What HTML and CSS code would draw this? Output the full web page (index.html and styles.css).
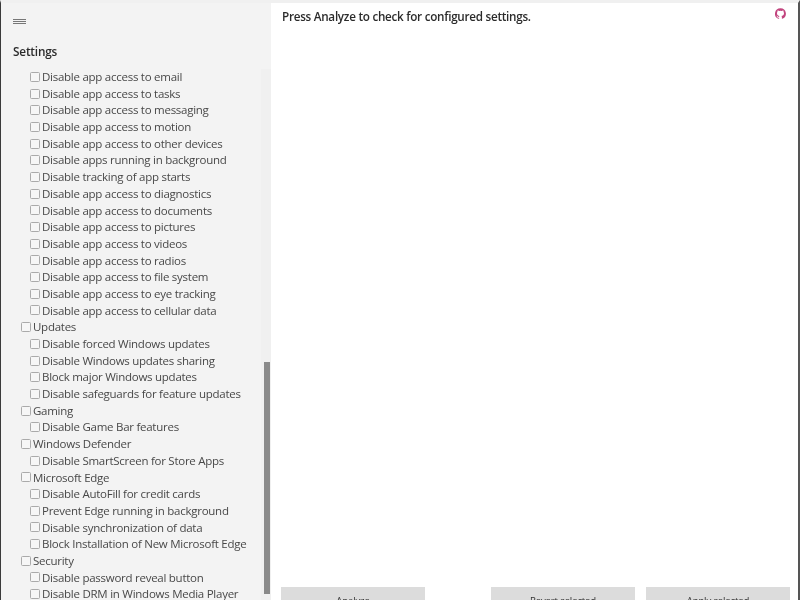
FILE: index.html
```html
<!DOCTYPE html>
<html lang="en">
<head>
<meta charset="utf-8">
<title>Settings</title>
<link rel="stylesheet" href="styles.css">
</head>
<body>
<div class="window">
  <aside class="sidebar">
    <div class="menu"><span></span><span></span><span></span></div>
    <h2 class="heading">Settings</h2>
    <div class="scroller">
      <ul class="tree">
        <li class="sub"><i></i>Disable app access to email</li>
        <li class="sub"><i></i>Disable app access to tasks</li>
        <li class="sub"><i></i>Disable app access to messaging</li>
        <li class="sub"><i></i>Disable app access to motion</li>
        <li class="sub"><i></i>Disable app access to other devices</li>
        <li class="sub"><i></i>Disable apps running in background</li>
        <li class="sub"><i></i>Disable tracking of app starts</li>
        <li class="sub"><i></i>Disable app access to diagnostics</li>
        <li class="sub"><i></i>Disable app access to documents</li>
        <li class="sub"><i></i>Disable app access to pictures</li>
        <li class="sub"><i></i>Disable app access to videos</li>
        <li class="sub"><i></i>Disable app access to radios</li>
        <li class="sub"><i></i>Disable app access to file system</li>
        <li class="sub"><i></i>Disable app access to eye tracking</li>
        <li class="sub"><i></i>Disable app access to cellular data</li>
        <li class="top"><i></i>Updates</li>
        <li class="sub"><i></i>Disable forced Windows updates</li>
        <li class="sub"><i></i>Disable Windows updates sharing</li>
        <li class="sub"><i></i>Block major Windows updates</li>
        <li class="sub"><i></i>Disable safeguards for feature updates</li>
        <li class="top"><i></i>Gaming</li>
        <li class="sub"><i></i>Disable Game Bar features</li>
        <li class="top"><i></i>Windows Defender</li>
        <li class="sub"><i></i>Disable SmartScreen for Store Apps</li>
        <li class="top"><i></i>Microsoft Edge</li>
        <li class="sub"><i></i>Disable AutoFill for credit cards</li>
        <li class="sub"><i></i>Prevent Edge running in background</li>
        <li class="sub"><i></i>Disable synchronization of data</li>
        <li class="sub"><i></i>Block Installation of New Microsoft Edge</li>
        <li class="top"><i></i>Security</li>
        <li class="sub"><i></i>Disable password reveal button</li>
        <li class="sub"><i></i>Disable DRM in Windows Media Player</li>
      </ul>
      <div class="track"><div class="thumb"></div></div>
    </div>
  </aside>
  <main class="content">
    <div class="topline">
      <p class="status">Press Analyze to check for configured settings.</p>
      <svg class="octocat" viewBox="0 0 16 16" width="11" height="11" aria-hidden="true"><path fill="#c2447e" d="M8 .2a8 8 0 0 0-2.5 15.6c.4.1.5-.2.5-.4v-1.4c-2.2.5-2.7-1-2.7-1-.4-.9-.9-1.2-.9-1.2-.7-.5.1-.5.1-.5.8.1 1.2.8 1.2.8.7 1.2 1.9.9 2.3.7.1-.5.3-.9.5-1.1-1.8-.2-3.6-.9-3.6-4 0-.9.3-1.6.8-2.1-.1-.2-.4-1 .1-2.1 0 0 .7-.2 2.2.8a7.6 7.6 0 0 1 4 0c1.5-1 2.2-.8 2.2-.8.5 1.1.2 1.9.1 2.1.5.6.8 1.3.8 2.1 0 3.1-1.9 3.7-3.7 3.9.3.3.6.8.6 1.5v2.2c0 .2.1.5.6.4A8 8 0 0 0 8 .2z"/></svg>
    </div>
    <div class="actions">
      <button class="btn" type="button">Analyze</button>
      <span class="spacer"></span>
      <button class="btn" type="button">Revert selected</button>
      <button class="btn" type="button">Apply selected</button>
    </div>
  </main>
</div>
</body>
</html>
```
FILE: styles.css
```css
* { box-sizing: border-box; }
html, body { margin: 0; height: 100%; overflow: hidden; background: #fff; }
body { font-family: "Open Sans", "Liberation Sans", sans-serif; color: #333; }
.window {
  display: flex;
  height: 600px;
  border-top: 3px solid #f0f0f0;
  border-left: 1px solid #3a3a3a;
  border-right: 2px solid #555;
  background: #fff;
  filter: blur(0.35px);
}
.sidebar {
  width: 270px;
  flex: none;
  background: #f3f3f3;
  display: flex;
  flex-direction: column;
  overflow: hidden;
}
.menu {
  display: flex;
  flex-direction: column;
  gap: 1px;
  margin: 16px 0 0 12px;
  width: 13px;
}
.menu span { display: block; height: 1px; background: #777; }
.heading {
  margin: 19px 0 0 12px;
  font-size: 11.8px;
  line-height: 16px;
  font-weight: 600;
  letter-spacing: -0.2px;
  color: #2b2b2b;
}
.scroller {
  flex: 1;
  display: flex;
  min-height: 0;
  margin-top: 10px;
}
.tree {
  list-style: none;
  margin: 0;
  padding: 0;
  flex: 1;
  font-size: 11.5px;
  line-height: 16.7px;
  letter-spacing: -0.26px;
  color: #484848;
}
.tree li { display: flex; align-items: center; height: 16.7px; white-space: nowrap; }
.tree i {
  flex: none;
  width: 10px;
  height: 10px;
  margin-right: 2px;
  margin-top: -1px;
  border: 1px solid #aaa;
  border-radius: 1.5px;
  background: #f6f6f6;
}
.top { padding-left: 20px; }
.sub { padding-left: 29px; }
.track {
  width: 10px;
  flex: none;
  background: #f0f0f0;
  display: flex;
  flex-direction: column;
  justify-content: flex-end;
}
.thumb { height: 232px; margin-bottom: 6px; width: 6px; background: #8a8a8a; margin-left: 3px; }
.content {
  flex: 1;
  display: flex;
  flex-direction: column;
  justify-content: space-between;
  min-width: 0;
  overflow: hidden;
}
.topline {
  display: flex;
  justify-content: space-between;
  padding: 4px 12px 0 11px;
}
.status { margin: 0; font-size: 11.7px; line-height: 18px; font-weight: 600; letter-spacing: -0.27px; color: #2b2b2b; }
.octocat { margin-top: 1px; }
.actions {
  display: flex;
  gap: 11px;
  height: 13px;
  padding: 0 0 0 10px;
}
.spacer { width: 44px; flex: none; }
.btn {
  width: 144px;
  height: 13px;
  flex: none;
  border: 0;
  background: #dcdcdc;
  font: 9.6px/13px "Open Sans", "Liberation Sans", sans-serif;
  letter-spacing: -0.15px;
  color: #333;
  padding: 7px 0 0;
  overflow: hidden;
}
```
